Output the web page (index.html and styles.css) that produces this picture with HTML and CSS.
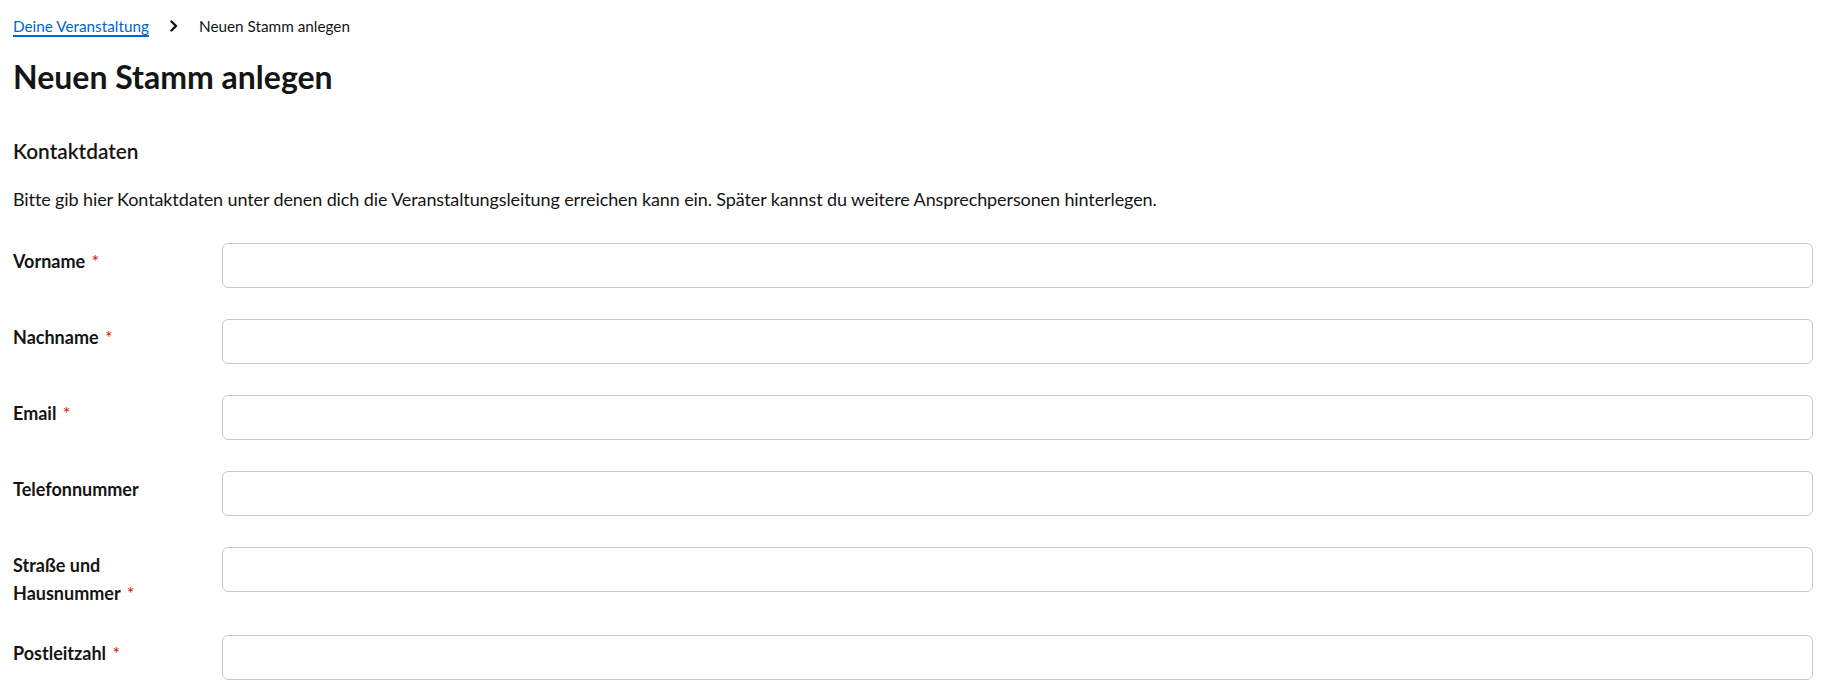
FILE: index.html
```html
<!DOCTYPE html>
<html lang="de">
<head>
<meta charset="utf-8">
<title>Neuen Stamm anlegen</title>
<link rel="stylesheet" href="styles.css">
</head>
<body>
<main class="page">
  <nav class="breadcrumb">
    <a class="crumb-link" href="#">Deine Veranstaltung</a>
    <svg class="crumb-sep" viewBox="0 0 8 12" width="8" height="12" aria-hidden="true"><path d="M1.5 1.5 L6 6 L1.5 10.5" fill="none" stroke="#151515" stroke-width="2.4" stroke-linecap="round" stroke-linejoin="round"/></svg>
    <span class="crumb-current">Neuen Stamm anlegen</span>
  </nav>
  <h1 class="title">Neuen Stamm anlegen</h1>
  <h2 class="section-title">Kontaktdaten</h2>
  <p class="intro">Bitte gib hier Kontaktdaten unter denen dich die Veranstaltungsleitung erreichen kann ein. Später kannst du weitere Ansprechpersonen hinterlegen.</p>
  <form class="form">
    <label class="label" for="f1">Vorname <span class="req">*</span></label>
    <input class="control" id="f1" type="text">
    <label class="label" for="f2">Nachname <span class="req">*</span></label>
    <input class="control" id="f2" type="text">
    <label class="label" for="f3">Email <span class="req">*</span></label>
    <input class="control" id="f3" type="text">
    <label class="label" for="f4">Telefonnummer</label>
    <input class="control" id="f4" type="text">
    <label class="label" for="f5">Straße und Hausnummer <span class="req">*</span></label>
    <input class="control" id="f5" type="text">
    <label class="label" for="f6">Postleitzahl <span class="req">*</span></label>
    <input class="control" id="f6" type="text">
  </form>
</main>
</body>
</html>
```
FILE: styles.css
```css
* { box-sizing: border-box; }
html, body { margin: 0; padding: 0; background: #ffffff; }
body {
  font-family: Lato, "Noto Sans", sans-serif;
  color: #151515;
}
.page {
  padding: 14px 14px 0 13px;
}
.breadcrumb {
  display: flex;
  align-items: center;
  height: 24px;
  font-size: 15.3px;
  line-height: 24px;
}
.crumb-link {
  color: #0066cc;
  text-decoration: underline;
  text-decoration-thickness: 2px;
  text-underline-offset: 3px;
}
.crumb-sep {
  margin: 0 21px 0 21px;
}
.crumb-current { color: #151515; }
.title {
  margin: 19px 0 0 0;
  font-size: 32px;
  line-height: 40px;
  font-weight: 700;
}
.section-title {
  margin: 39px 0 0 0;
  font-size: 20.8px;
  line-height: 30px;
  font-weight: 600;
}
.intro {
  margin: 20px 0 0 0;
  font-size: 18px;
  line-height: 27px;
  letter-spacing: -0.11px;
}
.form {
  margin-top: 30px;
  display: grid;
  grid-template-columns: 185px 1fr;
  column-gap: 24px;
  row-gap: 31px;
  align-items: start;
}
.label {
  padding-top: 4px;
  margin-bottom: -3px;
  font-size: 18px;
  line-height: 28px;
  font-weight: 700;
}
.req { color: #c9190b; font-weight: 400; margin-left: 2px; }
.control {
  display: block;
  width: 100%;
  height: 45px;
  border: 1px solid #c7c7c7;
  border-radius: 6px;
  background: #ffffff;
  font: inherit;
  padding: 0 12px;
}
```
